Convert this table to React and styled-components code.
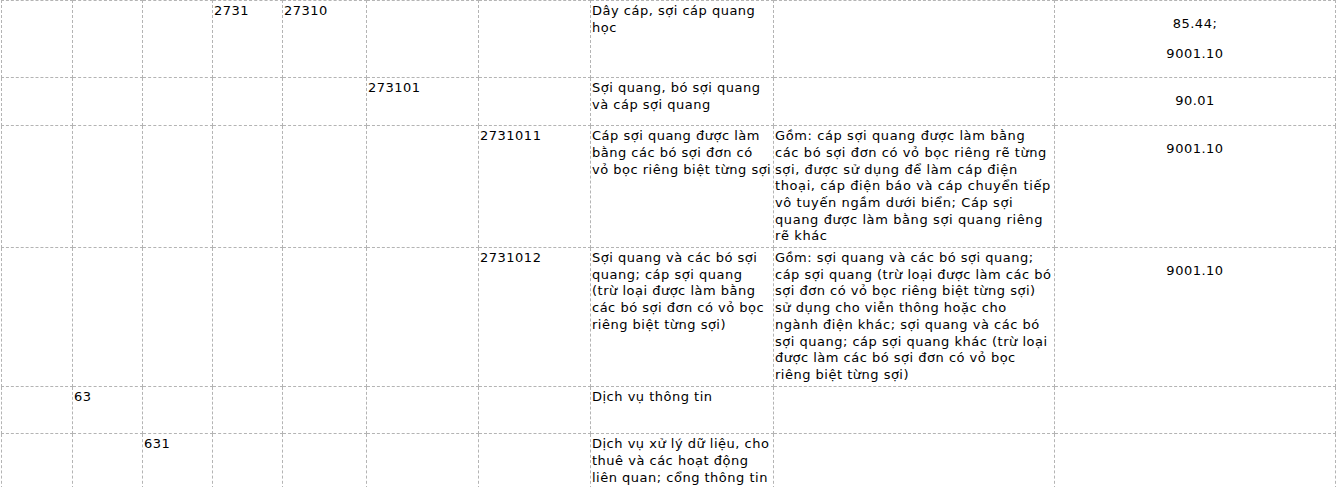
import React from 'react'
import styled, { createGlobalStyle } from 'styled-components'

const GlobalStyle = createGlobalStyle`
  body {
    margin: 0;
    background: #fff;
    font-family: 'DejaVu Sans', Verdana, sans-serif;
  }
`

const Wrap = styled.div`
  padding-left: 1px;
`

const Table = styled.table`
  width: 1335px;
  table-layout: fixed;
  border-collapse: collapse;
  font-size: 13px;
  line-height: 16.7px;
  color: #000;
`

const Cell = styled.td`
  border: 1px dashed #b4b4b4;
  padding: 2px 1px;
  vertical-align: top;
  letter-spacing: ${(p) => p.$spacing || 0.5}px;
  text-align: ${(p) => (p.$center ? 'center' : 'left')};
  overflow-wrap: break-word;
`

const Para = styled.p`
  margin: 13px 0;
`

const widths = [71, 70, 70, 70, 84, 112, 112, 183, 281, 281]

const rows = [
  { codes: { 3: '2731', 4: '27310' }, name: 'Dây cáp, sợi cáp quang học', desc: '', hs: ['85.44;', '9001.10'] },
  { codes: { 5: '273101' }, name: 'Sợi quang, bó sợi quang và cáp sợi quang', desc: '', hs: ['90.01'] },
  {
    codes: { 6: '2731011' },
    name: 'Cáp sợi quang được làm bằng các bó sợi đơn có vỏ bọc riêng biệt từng sợi',
    desc: 'Gồm: cáp sợi quang được làm bằng các bó sợi đơn có vỏ bọc riêng rẽ từng sợi, được sử dụng để làm cáp điện thoại, cáp điện báo và cáp chuyển tiếp vô tuyến ngầm dưới biển; Cáp sợi quang được làm bằng sợi quang riêng rẽ khác',
    descSpacing: 0.6,
    hs: ['9001.10'],
  },
  {
    codes: { 6: '2731012' },
    name: 'Sợi quang và các bó sợi quang; cáp sợi quang (trừ loại được làm bằng các bó sợi đơn có vỏ bọc riêng biệt từng sợi)',
    desc: 'Gồm: sợi quang và các bó sợi quang; cáp sợi quang (trừ loại được làm các bó sợi đơn có vỏ bọc riêng biệt từng sợi) sử dụng cho viễn thông hoặc cho ngành điện khác; sợi quang và các bó sợi quang; cáp sợi quang khác (trừ loại được làm các bó sợi đơn có vỏ bọc riêng biệt từng sợi)',
    hs: ['9001.10'],
  },
  { codes: { 1: '63' }, name: 'Dịch vụ thông tin', desc: '', hs: ['\u00a0'] },
  { codes: { 2: '631' }, name: 'Dịch vụ xử lý dữ liệu, cho thuê và các hoạt động liên quan; cổng thông tin', desc: '', hs: ['\u00a0'] },
]

export default function App() {
  return (
    <Wrap>
      <GlobalStyle />
      <Table>
        <colgroup>
          {widths.map((w, i) => (
            <col key={i} style={{ width: w }} />
          ))}
        </colgroup>
        <tbody>
          {rows.map((r, i) => (
            <tr key={i}>
              {[0, 1, 2, 3, 4, 5, 6].map((c) => (
                <Cell key={c}>{r.codes[c] || ''}</Cell>
              ))}
              <Cell>{r.name}</Cell>
              <Cell $spacing={r.descSpacing}>{r.desc}</Cell>
              <Cell $center>
                {r.hs.map((h, j) => (
                  <Para key={j}>{h}</Para>
                ))}
              </Cell>
            </tr>
          ))}
        </tbody>
      </Table>
    </Wrap>
  )
}
